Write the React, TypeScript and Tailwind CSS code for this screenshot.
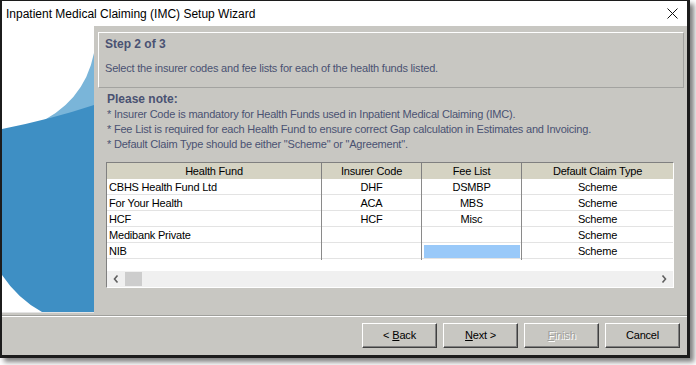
import React from 'react';

const rows = [
  { fund: 'CBHS Health Fund Ltd', code: 'DHF', fee: 'DSMBP', claim: 'Scheme', selected: false },
  { fund: 'For Your Health', code: 'ACA', fee: 'MBS', claim: 'Scheme', selected: false },
  { fund: 'HCF', code: 'HCF', fee: 'Misc', claim: 'Scheme', selected: false },
  { fund: 'Medibank Private', code: '', fee: '', claim: 'Scheme', selected: false },
  { fund: 'NIB', code: '', fee: '', claim: 'Scheme', selected: true },
];

const SidePanel = () => (
  <div className="w-[92px] h-[287px] bg-white border-b border-[#e4e4e4]">
    <svg width="92" height="286" viewBox="0 0 92 286">
      <path d="M92,27 Q82,78 30,100 L92,100 Z" fill="#7ab5d9" />
      <path d="M0,103 Q50,93 92,79 L92,286 L40,286 Q16,273 0,249 Z" fill="#3e8fc4" />
    </svg>
  </div>
);

const WinButton = ({ children, disabled }: { children: React.ReactNode; disabled?: boolean }) => (
  <button
    className={`w-[75px] h-[25px] flex items-center justify-center bg-[#c8c7c2] border border-t-white border-l-white border-r-[#404040] border-b-[#404040] shadow-[inset_-1px_-1px_0_#808080] text-[11px] tracking-[-0.2px] ${
      disabled ? 'text-[#a0a09c] [text-shadow:1px_1px_0_#fff]' : 'text-black'
    }`}
  >
    {children}
  </button>
);

const App = () => {
  return (
    <div className="w-[696px] h-[365px] bg-white font-['Liberation_Sans',Arial,sans-serif]">
      <div className="w-[690px] h-[358px] flex flex-col border-t border-l-2 border-r-[3px] border-b-[3px] border-[#1c1c1c] shadow-[4px_4px_5px_rgba(0,0,0,0.5)]">
        {/* Title bar */}
        <div className="h-[25px] bg-white flex items-center justify-between pl-[4px] pr-[9px]">
          <span className="text-[12px] text-black">Inpatient Medical Claiming (IMC) Setup Wizard</span>
          <svg width="11" height="11" viewBox="0 0 11 11">
            <path d="M0.5,0.5 L10.5,10.5 M10.5,0.5 L0.5,10.5" stroke="#111" strokeWidth="1" />
          </svg>
        </div>

        {/* Body */}
        <div className="h-[289px] bg-[#c8c7c2] flex">
          <SidePanel />
          <div className="flex-1 flex flex-col">
            <div className="mt-[6px] ml-[4px] mr-[3px] h-[56px] border border-t-white border-l-white border-r-[#a3a3a0] border-b-[#a3a3a0] pl-[6px] pt-[3px]">
              <div className="text-[12px] leading-[16px] font-bold text-[#4a5272]">Step 2 of 3</div>
              <div className="mt-[8px] text-[11px] leading-[16px] tracking-[-0.2px] text-[#4a5272]">
                Select the insurer codes and fee lists for each of the health funds listed.
              </div>
            </div>

            <div className="mt-[3px] ml-[13px] text-[#4a5272]">
              <div className="text-[12px] leading-[16px] font-bold">Please note:</div>
              <div className="text-[11px] leading-[15px] tracking-[-0.2px]">
                * Insurer Code is mandatory for Health Funds used in Inpatient Medical Claiming (IMC).
              </div>
              <div className="text-[11px] leading-[15px] tracking-[-0.2px]">
                * Fee List is required for each Health Fund to ensure correct Gap calculation in Estimates and Invoicing.
              </div>
              <div className="text-[11px] leading-[15px] tracking-[-0.2px]">
                * Default Claim Type should be either "Scheme" or "Agreement".
              </div>
            </div>

            {/* Grid */}
            <div className="mt-[10px] ml-[12px] w-[568px] h-[126px] flex flex-col bg-white border border-t-[#808080] border-l-[#808080] border-r-white border-b-white text-[11px] tracking-[-0.2px] text-black">
              <div className="h-[16px] grid grid-cols-[215px_100px_100px_1fr] bg-[#d5d3c3]">
                <div className="border-r border-[#808080] flex items-center justify-center">Health Fund</div>
                <div className="border-r border-[#808080] flex items-center justify-center">Insurer Code</div>
                <div className="border-r border-[#808080] flex items-center justify-center">Fee List</div>
                <div className="flex items-center justify-center">Default Claim Type</div>
              </div>
              {rows.map((r) => (
                <div key={r.fund} className="h-[16px] grid grid-cols-[215px_100px_100px_1fr] border-b border-[#e3e3e3]">
                  <div className="border-r border-[#8a8a8a] pl-[2px] flex items-center">{r.fund}</div>
                  <div className="border-r border-[#8a8a8a] flex items-center justify-center">{r.code}</div>
                  <div className="border-r border-[#8a8a8a] flex items-center justify-center">
                    {r.selected ? <div className="w-[96px] h-[13px] bg-[#99c9f9]" /> : r.fee}
                  </div>
                  <div className="flex items-center justify-center">{r.claim}</div>
                </div>
              ))}
              <div className="flex-1" />
              <div className="h-[16px] bg-[#f0f0f0] flex items-center">
                <div className="w-[18px] h-[16px] flex items-center justify-center">
                  <svg width="6" height="8" viewBox="0 0 6 8">
                    <path d="M4.5,0.5 L1.5,4 L4.5,7.5" stroke="#606060" strokeWidth="1.6" fill="none" />
                  </svg>
                </div>
                <div className="w-[17px] h-[14px] bg-[#cdcdcd]" />
                <div className="flex-1" />
                <div className="w-[18px] h-[16px] flex items-center justify-center">
                  <svg width="6" height="8" viewBox="0 0 6 8">
                    <path d="M1.5,0.5 L4.5,4 L1.5,7.5" stroke="#606060" strokeWidth="1.6" fill="none" />
                  </svg>
                </div>
              </div>
            </div>
          </div>
        </div>

        {/* Divider */}
        <div className="h-[2px] border-t border-[#a0a09c] border-b border-b-white" />

        {/* Buttons */}
        <div className="flex-1 bg-[#c8c7c2] flex justify-end gap-[6px] pt-[6px] pr-[7px]">
          <WinButton>
            &lt; <span className="underline ml-[3px]">B</span>ack
          </WinButton>
          <WinButton>
            <span className="underline">N</span>ext &gt;
          </WinButton>
          <WinButton disabled>
            <span className="underline">F</span>inish
          </WinButton>
          <WinButton>Cancel</WinButton>
        </div>
      </div>
    </div>
  );
};

export default App;
